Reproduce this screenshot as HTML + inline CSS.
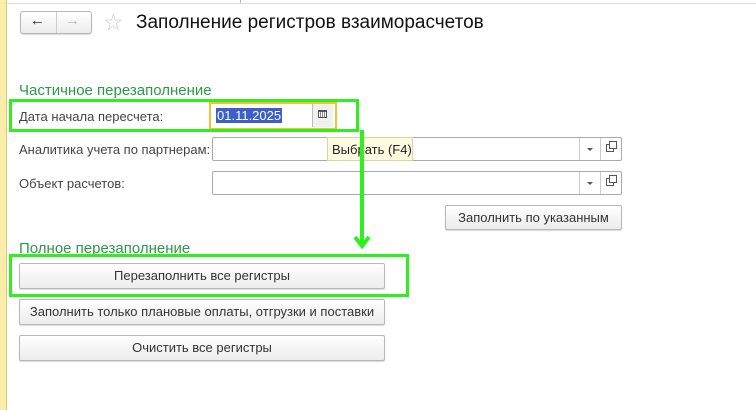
<!DOCTYPE html>
<html><head><meta charset="utf-8"><style>
body{margin:0;width:756px;height:410px;background:#fff;position:relative;overflow:hidden;font-family:"Liberation Sans",Arial,sans-serif;font-size:13px;color:#333}
.a{position:absolute}
.btn{position:absolute;border:1px solid #b8b8b8;border-radius:2px;background:linear-gradient(#fff,#ececec);box-shadow:0 1px 1px rgba(0,0,0,.15);text-align:center;color:#333;font-size:13px;box-sizing:border-box}
.fld{position:absolute;border:1px solid #aaa;border-radius:2px;background:#fff;box-sizing:border-box}
.lbl{position:absolute;left:19px;font-size:13px;color:#444}
.grp{position:absolute;left:19px;font-size:15px;color:#2a9a48}
.g{position:absolute;border:3px solid #2ef01e;box-sizing:border-box}
</style></head><body>
<div class="a" style="left:0;top:0;width:6px;height:410px;background:#fbeea8"></div>
<div class="a" style="left:6px;top:0;width:1px;height:410px;background:#d8c880"></div>
<div class="a" style="left:240px;top:0;width:1px;height:4px;background:#bbb"></div>
<div class="a" style="left:7px;top:3px;width:749px;height:1px;background:#ddd"></div>
<div class="btn" style="left:20px;top:11px;width:72px;height:23px;border-radius:3px"></div>
<div class="a" style="left:56px;top:12px;width:1px;height:21px;background:#ccc"></div>
<div class="a" style="left:30px;top:12px;font-size:15px;font-weight:bold;color:#333">&#8592;</div>
<div class="a" style="left:65px;top:12px;font-size:15px;font-weight:bold;color:#bbb">&#8594;</div>
<div class="a" style="left:103px;top:9px;font-size:23px;color:#ccc">&#9734;</div>
<div class="a" style="left:136px;top:12px;font-size:19px;color:#111">Заполнение регистров взаиморасчетов</div>

<div class="grp" style="top:82px">Частичное перезаполнение</div>
<div class="lbl" style="top:109px">Дата начала пересчета:</div>
<div class="a" style="left:209px;top:102px;width:128px;height:28px;border:2px solid #f5c032;box-sizing:border-box"></div>
<div class="a" style="left:216px;top:108px;background:#3c5fc8;color:#fff;font-size:13px;padding:0 1px;line-height:15px">01.11.2025</div>
<div class="a" style="left:312px;top:104px;width:1px;height:23px;background:#bbb"></div>
<div class="a" style="left:313px;top:104px;width:20px;height:23px;background:#f0f0f0"></div>
<div class="a" style="left:318px;top:110px;width:9px;height:8px;border:1px solid #555;border-top-width:2px;box-sizing:border-box;background:repeating-linear-gradient(90deg,#fff 0 1px,#888 1px 2px)"></div>

<div class="lbl" style="top:142px">Аналитика учета по партнерам:</div>
<div class="fld" style="left:212px;top:137px;width:410px;height:24px"></div>
<div class="a" style="left:579px;top:138px;width:1px;height:22px;background:#ccc"></div>
<div class="a" style="left:600px;top:138px;width:1px;height:22px;background:#ccc"></div>
<div class="a" style="left:587px;top:148px;border:3px solid transparent;border-top:3px solid #555"></div>
<div class="a" style="left:606px;top:144px;width:6px;height:6px;border:1px solid #555"></div>
<div class="a" style="left:609px;top:141px;width:6px;height:6px;border:1px solid #555;background:#fff"></div>
<div class="a" style="left:327px;top:137px;width:86px;height:24px;background:#fffbe0;border:1px solid #ddd3a0;box-sizing:border-box;font-size:13px;color:#222;padding:4px 0 0 4px">Выбрать (F4)</div>

<div class="lbl" style="top:176px">Объект расчетов:</div>
<div class="fld" style="left:212px;top:171px;width:410px;height:24px"></div>
<div class="a" style="left:579px;top:172px;width:1px;height:22px;background:#ccc"></div>
<div class="a" style="left:600px;top:172px;width:1px;height:22px;background:#ccc"></div>
<div class="a" style="left:587px;top:182px;border:3px solid transparent;border-top:3px solid #555"></div>
<div class="a" style="left:606px;top:178px;width:6px;height:6px;border:1px solid #555"></div>
<div class="a" style="left:609px;top:175px;width:6px;height:6px;border:1px solid #555;background:#fff"></div>

<div class="btn" style="left:445px;top:205px;width:177px;height:25px;line-height:23px">Заполнить по указанным</div>

<div class="g" style="left:9px;top:99px;width:350px;height:33px"></div>
<div class="a" style="left:360px;top:130px;width:4px;height:116px;background:#2ef01e"></div>
<svg class="a" style="left:352px;top:234px" width="20" height="16"><path d="M3 3 L10 12 L17 3" stroke="#2ef01e" stroke-width="4" fill="none"/></svg>

<div class="grp" style="top:240px">Полное перезаполнение</div>
<div class="btn" style="left:19px;top:263px;width:366px;height:26px;line-height:24px">Перезаполнить все регистры</div>
<div class="g" style="left:9px;top:254px;width:400px;height:43px"></div>
<div class="btn" style="left:19px;top:299px;width:366px;height:26px;line-height:24px">Заполнить только плановые оплаты, отгрузки и поставки</div>
<div class="btn" style="left:19px;top:335px;width:366px;height:26px;line-height:24px">Очистить все регистры</div>
</body></html>
